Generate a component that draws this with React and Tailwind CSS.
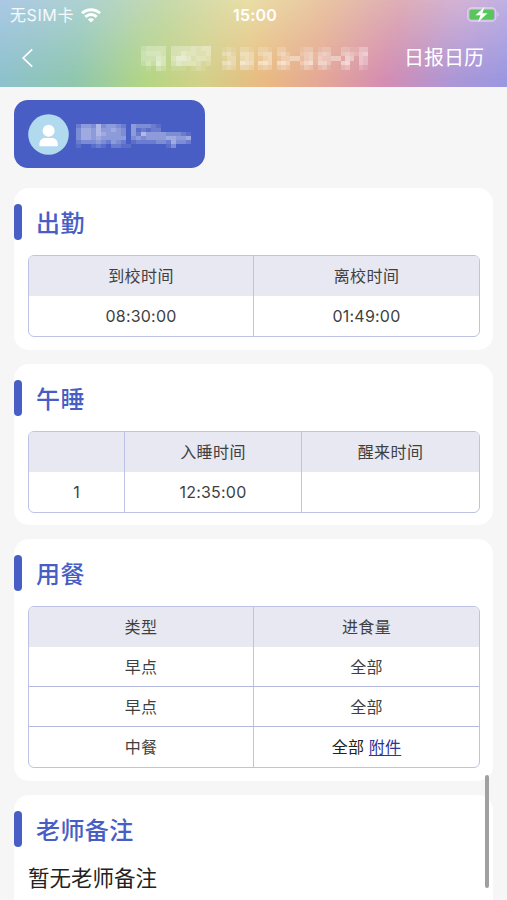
const NAME_MOSAIC = [
  '23333033334344',
  '34443033544334',
  '33354046653443',
  '24264035444312',
  '01032011101210',
];

const DATE_MOSAIC = [
  '12102210221022000122012200221133',
  '34204430344034200234134300343245',
  '13303430134013344134143344054043',
  '45306540564056400356155300560043',
  '23203320232023200132023100230021',
];

const PROFILE_MOSAIC = [
  '244363443204333210000000',
  '355464454304121220000000',
  '355465444304264444333210',
  '355454444403434444554450',
  '233343243201222233253320',
  '100121022110000000130000',
];

function Mosaic({ rows, cellW, cellH, className }) {
  const w = rows[0].length * cellW;
  const h = rows.length * cellH;
  return (
    <svg
      className={className}
      width={w}
      height={h}
      viewBox={`0 0 ${w} ${h}`}
      shapeRendering="crispEdges"
      aria-hidden="true"
    >
      {rows.flatMap((row, y) =>
        [...row].map((v, x) =>
          v === '0' ? null : (
            <rect
              key={`${x}-${y}`}
              x={x * cellW}
              y={y * cellH}
              width={cellW}
              height={cellH}
              fill="#fff"
              fillOpacity={Number(v) * 0.095}
            />
          )
        )
      )}
    </svg>
  );
}

function StatusBar() {
  return (
    <div className="grid h-[30px] grid-cols-3 items-center pr-[7px] pl-[10px] text-white">
      <div className="flex items-center gap-[7px]">
        <span className="text-[16px] leading-5 tracking-[0.6px] whitespace-nowrap text-white/90">无SIM卡</span>
        <svg width="20" height="15" viewBox="0 0 20 15" fill="none" stroke="#fff" strokeWidth="3">
          <path d="M1 5.3C6 .4 14 .4 19 5.3" />
          <path d="M4.3 8.8c3.2-3.1 8.2-3.1 11.4 0" />
          <path d="M10 14.6 6.9 11.5c1.7-1.6 4.5-1.6 6.2 0z" fill="#fff" stroke="none" />
        </svg>
      </div>
      <div className="text-center text-[16px] leading-5 font-semibold tracking-[0.2px]">15:00</div>
      <svg className="mt-[-1px] justify-self-end" width="33" height="17" viewBox="0 0 33 17">
        <rect x=".8" y="2" width="28" height="13" rx="3.8" fill="none" stroke="#fff" strokeOpacity=".45" strokeWidth="1.3" />
        <rect x="2.6" y="3.8" width="24.4" height="9.6" rx="1.8" fill="#57c75b" />
        <path d="M30.5 6.3c1.6.5 1.6 4 0 4.5z" fill="#fff" fillOpacity=".45" />
        <path d="M17.5.8 8.5 9.3h5l-2.4 6.8 9.5-8.8h-5.2z" fill="#fff" />
      </svg>
    </div>
  );
}

function Header() {
  return (
    <header className="relative h-[87px] shrink-0 overflow-hidden bg-[linear-gradient(90deg,#8dc2cd_0%,#90c7ae_15%,#b4d684_29%,#d3d189_40%,#eaba82_52%,#e5a896_63%,#d58db3_76%,#ad97d6_89%,#9b97e2_100%)]">
      <div className="absolute inset-0 bg-[linear-gradient(90deg,#aac8e4_0%,#add2d0_17%,#c6d9ab_33%,#e9dea6_49%,#e9c4a2_64%,#deadb6_79%,#d2b2d6_91%,#c0b0e2_100%)] [mask-image:linear-gradient(180deg,#000_0%,transparent_92%)]" />
      <div className="relative">
        <StatusBar />
        <div className="flex h-[56px] items-center pr-[23px] pl-[21px]">
          <svg width="13" height="20" viewBox="0 0 13 20" fill="none" stroke="#fff" strokeWidth="1.7">
            <path d="M11.2 1.3 2.2 10l9 8.7" />
          </svg>
          <div className="ml-[107px] flex flex-1 items-start gap-[11px]">
            <Mosaic rows={NAME_MOSAIC} cellW={5} cellH={5} />
            <Mosaic rows={DATE_MOSAIC} cellW={4.56} cellH={4.6} className="mt-[1px]" />
          </div>
          <span className="text-[20px] leading-6 whitespace-nowrap text-white">日报日历</span>
        </div>
      </div>
    </header>
  );
}

function Profile() {
  return (
    <div className="flex h-[68px] w-[191px] items-center rounded-[14px] bg-[#485ec4] pl-[14px]">
      <svg width="41" height="41" viewBox="0 0 41 41">
        <circle cx="20.5" cy="20.5" r="20.3" fill="#b2daef" />
        <circle cx="20.6" cy="16.8" r="6" fill="#fff" />
        <path d="M11.3 31c0-4.5 2.7-7 6-7h6.6c3.3 0 6 2.5 6 7 0 1-.5 1.3-1.2 1.3H12.5c-.7 0-1.2-.3-1.2-1.3z" fill="#fff" />
      </svg>
      <Mosaic rows={PROFILE_MOSAIC} cellW={5} cellH={4} className="mt-[3px] ml-[7px]" />
    </div>
  );
}

function Card({ title, className, children }) {
  return (
    <section className={`rounded-[15px] bg-white pt-4 ${className}`}>
      <div className="flex h-[36px] items-center gap-[14px]">
        <span className="h-[36px] w-[8px] rounded-full bg-[#485ec4]" />
        <h2 className="mt-[3px] text-[24px] leading-9 font-medium tracking-[0.4px] text-[#485ec4]">{title}</h2>
      </div>
      {children}
    </section>
  );
}

function Table({ cols, head, rows }) {
  return (
    <div className="mr-[13px] ml-[14px] mt-[15px] overflow-hidden rounded-[6px] border border-[#bdc2e6] text-[16px] leading-6 text-[#3f3f3f]">
      <div className={`grid h-[40px] bg-[#e7e8f1] ${cols}`}>
        {head.map((cell, i) => (
          <div key={i} className="flex items-center justify-center border-[#bdc2e6] tracking-[0.4px] not-last:border-r">
            {cell}
          </div>
        ))}
      </div>
      {rows.map((row, r) => (
        <div key={r} className={`grid h-[40px] border-[#b3b8df] not-last:border-b ${cols}`}>
          {row.map((cell, i) => (
            <div key={i} className="flex items-center justify-center border-[#bdc2e6] tracking-[0.2px] not-last:border-r">
              {cell}
            </div>
          ))}
        </div>
      ))}
    </div>
  );
}

export default function App() {
  return (
    <div className="relative flex h-[900px] w-[507px] flex-col overflow-hidden bg-[#f6f6f6] font-['Inter','Noto_Sans_CJK_SC',sans-serif]">
      <Header />
      <main className="flex flex-col px-[14px] pt-[13px]">
        <Profile />
        <Card title="出勤" className="mt-[20px] h-[162px]">
          <Table cols="grid-cols-2" head={['到校时间', '离校时间']} rows={[['08:30:00', '01:49:00']]} />
        </Card>
        <Card title="午睡" className="mt-[14px] h-[161px]">
          <Table
            cols="grid-cols-[96px_177px_1fr]"
            head={['', '入睡时间', '醒来时间']}
            rows={[['1', '12:35:00', '']]}
          />
        </Card>
        <Card title="用餐" className="mt-[14px] h-[242px]">
          <Table
            cols="grid-cols-2"
            head={['类型', '进食量']}
            rows={[
              ['早点', '全部'],
              ['早点', '全部'],
              [
                '中餐',
                <span key="amount" className="text-[#222]">
                  全部 <a className="text-[#2c3494] underline underline-offset-2">附件</a>
                </span>,
              ],
            ]}
          />
        </Card>
        <Card title="老师备注" className="mt-[14px] h-[160px]">
          <p className="mt-[15px] ml-[14px] text-[21.5px] leading-8 text-[#222]">暂无老师备注</p>
        </Card>
      </main>
      <div className="absolute top-[775px] left-[485px] h-[113px] w-[4px] rounded-full bg-[#a0a0a0]" />
    </div>
  );
}
